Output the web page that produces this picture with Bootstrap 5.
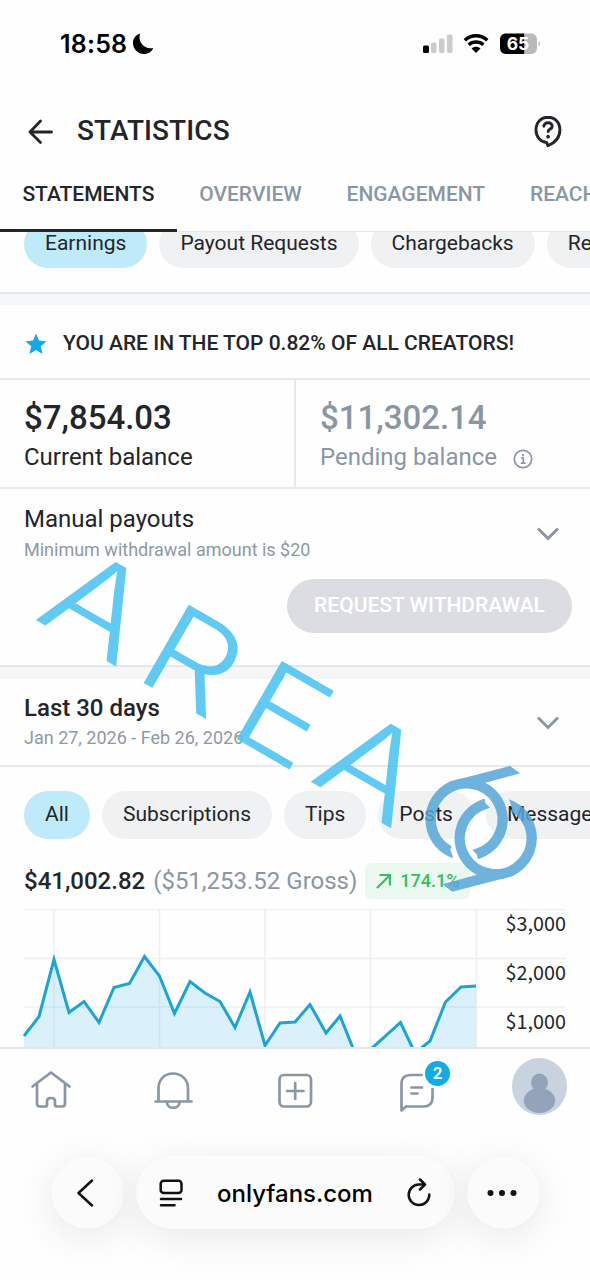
<!DOCTYPE html>
<html lang="en">
<head>
<meta charset="utf-8">
<meta name="viewport" content="width=device-width, initial-scale=1">
<title>Statistics</title>
<link rel="stylesheet" href="https://cdn.jsdelivr.net/npm/bootstrap@5.3.0/dist/css/bootstrap.min.css">
<style>
  html, body { overflow: hidden; }
  body { font-family: Roboto, "Liberation Sans", sans-serif; color: #242529; background: #fefefe; line-height: 1; }
  svg { display: block; flex: none; }
  .screen { width: 590px; height: 1280px; overflow: hidden; }
  .ios { font-family: Inter, "Liberation Sans", sans-serif; color: #000; }
  .status { height: 88px; padding: 0 50px 0 60px; }
  .clock { font-size: 25px; font-weight: 600; letter-spacing: .2px; }
  .moon { margin-left: 5px; }
  .page-head { height: 84px; padding: 1px 27px 0; gap: 24px; }
  .page-title { font-size: 28px; font-weight: 500; letter-spacing: .1px; }
  .tabs { height: 60px; border-bottom: 1px solid #e4e6e8; }
  .tab { font-size: 21px; font-weight: 500; color: #8a96a3; padding: 12px 22.4px 0; height: 60px; }
  .tab.active { color: #242529; border-bottom: 3px solid #242529; }
  .clip-pills { height: 62px; border-bottom: 2px solid #e4e7ea; }
  .clip-pills .pills { margin-top: -12.5px; }
  .clip-pills .pill { padding-bottom: 1px; }
  .pills { gap: 12px; padding-left: 24px; }
  .pill { height: 48px; border-radius: 24px; background: #f0f1f3; padding: 0 21px 1px; font-size: 21px; }
  .pill.active { background: #bfeafa; }
  .band { height: 12px; background: #f4f6f8; }
  .band-top { height: 11px; }
  .top-row { height: 75px; padding: 4px 0 0 25px; gap: 16px; border-bottom: 2px solid #e7e9eb; font-size: 21px; font-weight: 500; }
  .balances { height: 109px; border-bottom: 2px solid #e7e9eb; }
  .balance { padding: 21px 24px 0; width: 294px; }
  .balance + .balance { border-left: 2px solid #e7e9eb; }
  .amount { font-size: 33px; font-weight: 500; margin-bottom: 11px; }
  .row-title { font-size: 24px; }
  .medium { font-weight: 500; }
  .soft { color: #8a96a3; }
  .note { font-size: 18px; color: #8f99a4; margin-top: 10px; }
  .payouts { height: 178px; padding: 18px 18px 0 24px; border-bottom: 2px solid #e4e7ea; }
  .chev { margin: 19px 12px 0 0; }
  .withdraw { width: 285px; height: 54px; border-radius: 27px; background: #dbdde2; color: #fff; font-size: 21px; font-weight: 500; margin-top: 20px; padding-bottom: 2px; }
  .period { height: 88px; padding: 17px 18px 0 24px; border-bottom: 2px solid #e7e9eb; }
  .period .note { margin-top: 9px; }
  .filters { margin-top: 24px; }
  .totals { height: 36px; margin: 24px 0 10px; padding-left: 24px; font-size: 24px; gap: 8px; }
  .trend { height: 36px; width: 105px; border-radius: 6px; background: #ebf8f0; color: #35bd60; font-size: 18px; font-weight: 500; }
  .bottom-nav { height: 84px; border-top: 2px solid #e4e7ea; }
  .count { width: 25px; height: 25px; background: #10abe9; color: #fff; font-size: 17px; font-weight: 600; left: 425px; top: 12px; }
  .browser { padding-left: 51px; gap: 12px; margin-top: 25px; }
  .glass { background: #fbfbfb; height: 73px; border-radius: 37px; box-shadow: 0 8px 40px rgba(0,0,0,.09), 0 0 3px rgba(0,0,0,.025); }
  .round { width: 73px; padding-right: 3px; }
  .address { width: 319px; padding-left: 23px; gap: 34px; }
  .host { font-size: 24px; font-weight: 500; padding-top: 3px; }
</style>
</head>
<body>
<main class="screen position-relative">
  <header class="ios status d-flex align-items-center">
    <span class="clock">18:58</span>
    <svg class="moon" width="22" height="22" viewBox="0 0 22 22"><path d="M8 0.600C3.500 2 1 5.800 1 10c0 6 4.800 11 11 11 4.300 0 7.800-2.300 9.300-6C12.800 17 5.500 9.500 8 .6z"/></svg>
    <svg class="ms-auto" width="118" height="26" viewBox="422 31 118 26">
      <rect x="423" y="45.500" width="6" height="7.500" rx="1.500"/>
      <g fill="#cbcbcb"><rect x="431" y="42.500" width="5.500" height="10.500" rx="1.500"/><rect x="439" y="38.500" width="5.500" height="14.500" rx="1.500"/><rect x="447" y="34.500" width="5.500" height="18.500" rx="1.500"/></g>
      <g fill="none" stroke="#000" stroke-width="3.400"><path d="M464.800 40.200c6.500-5.900 16-5.900 22.500 0M468.700 44.700c4.200-3.700 10.500-3.700 14.700 0"/></g>
      <path d="M476 53l-4.500-4.600c2.700-2.200 6.300-2.200 9 0z"/>
      <path d="M506.500 33.500h18v20.500h-18c-4.500 0-6.500-2.500-6.500-6.500v-7.500c0-4 2-6.500 6.500-6.500z"/>
      <path d="M524.500 33.500h6c4.500 0 6.500 2.500 6.500 6.500v7.500c0 4-2 6.500-6.500 6.500h-6z" fill="#b9b9b9"/>
      <path d="M538.500 41.200c2 .7 2 4.300 0 5z" fill="#b9b9b9"/>
      <text x="518" y="50" font-size="17.500" font-weight="700" fill="#fff" text-anchor="middle">65</text>
    </svg>
  </header>

  <div class="page-head d-flex align-items-center">
    <svg width="26" height="28" viewBox="0 0 26 28" fill="none" stroke="#242529" stroke-width="2.800" stroke-linecap="round" stroke-linejoin="round"><path d="M24.500 15H3M13.500 4L3 15l10.500 10.500"/></svg>
    <span class="page-title">STATISTICS</span>
    <svg class="ms-auto" width="30" height="36" viewBox="533 113 30 36" fill="none" stroke="#242529" stroke-width="2.900" stroke-linecap="round" stroke-linejoin="round"><path d="M548 117.300c-7 0-12 5.200-12 12.700 0 6.700 4.500 12 10.600 12.500l1.300 3.200c7.500-3 12-8.700 12-15.900 0-7.300-4.900-12.500-11.900-12.500z"/><path d="M543.800 126.200c.3-4.700 8.500-4.600 8.400.2-.1 2.700-4 2.600-4.100 5.200"/><circle cx="548.100" cy="136.700" r="1.900" fill="#242529" stroke="none"/></svg>
  </div>

  <nav class="tabs d-flex text-nowrap">
    <span class="tab active">STATEMENTS</span>
    <span class="tab">OVERVIEW</span>
    <span class="tab">ENGAGEMENT</span>
    <span class="tab">REACH</span>
  </nav>

  <section class="clip-pills overflow-hidden">
    <div class="pills d-flex text-nowrap">
      <span class="pill active d-flex align-items-center">Earnings</span>
      <span class="pill d-flex align-items-center">Payout Requests</span>
      <span class="pill d-flex align-items-center">Chargebacks</span>
      <span class="pill d-flex align-items-center">Referrals</span>
    </div>
  </section>
  <div class="band band-top"></div>

  <section class="top-row d-flex align-items-center">
    <svg width="22" height="22" viewBox="0 0 22 22" fill="#10abe9"><path d="M11 .5l3 7 7.500.7-5.700 5 1.700 7.800-6.500-4-6.500 4 1.700-7.800-5.700-5 7.500-.7z"/></svg>
    <span>YOU ARE IN THE TOP 0.82% OF ALL CREATORS!</span>
  </section>

  <section class="balances d-flex">
    <div class="balance">
      <div class="amount">$7,854.03</div>
      <div class="row-title">Current balance</div>
    </div>
    <div class="balance flex-fill soft">
      <div class="amount">$11,302.14</div>
      <div class="row-title d-flex align-items-center">Pending balance
        <svg class="ms-3 mt-1" width="20" height="20" viewBox="0 0 20 20" fill="none" stroke="#8a96a3" stroke-width="1.700"><circle cx="10" cy="10" r="8.700"/><path d="M8 9h2.300v5M7.800 14.200h4.600M10 5v2.300"/></svg></div>
    </div>
  </section>

  <section class="payouts">
    <div class="d-flex justify-content-between">
      <div>
        <div class="row-title">Manual payouts</div>
        <div class="note">Minimum withdrawal amount is $20</div>
      </div>
      <svg class="chev" width="24" height="16" viewBox="0 0 24 16" fill="none" stroke="#8a96a3" stroke-width="3"><path d="M2 2.500l10 10 10-10"/></svg>
    </div>
    <div class="withdraw ms-auto d-flex align-items-center justify-content-center">REQUEST WITHDRAWAL</div>
  </section>
  <div class="band"></div>

  <section class="period d-flex justify-content-between">
    <div>
      <div class="row-title medium">Last 30 days</div>
      <div class="note">Jan 27, 2026 - Feb 26, 2026</div>
    </div>
    <svg class="chev" width="24" height="16" viewBox="0 0 24 16" fill="none" stroke="#8a96a3" stroke-width="3"><path d="M2 2.500l10 10 10-10"/></svg>
  </section>

  <section>
    <div class="pills filters d-flex text-nowrap">
      <span class="pill active d-flex align-items-center">All</span>
      <span class="pill d-flex align-items-center">Subscriptions</span>
      <span class="pill d-flex align-items-center">Tips</span>
      <span class="pill d-flex align-items-center">Posts</span>
      <span class="pill d-flex align-items-center">Messages</span>
    </div>
    <div class="totals d-flex align-items-center">
      <span class="medium">$41,002.82</span>
      <span class="soft">($51,253.52 Gross)</span>
      <span class="trend d-flex align-items-center justify-content-center">
        <svg width="16" height="16" viewBox="0 0 16 16" fill="none" stroke="#35bd60" stroke-width="2.200"><path d="M1 15L14 2M3.500 2H14v10.500"/></svg>
        <span class="ms-2">174.1%</span>
      </span>
    </div>
    <svg width="590" height="138" viewBox="0 909 590 138">
      <path d="M24 909.500H566M24 958.500H566M24 1007H566M54 909V1047M159.500 909V1047M265 909V1047M370.500 909V1047M476.500 909V1047" stroke="#eeeff1" stroke-width="1.500" fill="none"/>
      <path fill="#10abe9" fill-opacity=".15" d="M24 1036L39 1016.500 54 959.500 69 1012.500 84 1001.500 99 1022.500 114 987.500 129.500 983.500 144.500 956.500 159.500 976 174.500 1013.500 190 981.500 205 993 220 1001.500 235 1027.500 250 992 265 1045.500 280 1023 295 1022 310 1004.500 326 1033 340 1016 355 1053 371 1049 400.500 1022.500 415 1053 430 1041 445.500 1002 461 987 476 986V1060H24z"/>
      <path fill="none" stroke="#1ca4d6" stroke-width="3" d="M24 1036L39 1016.500 54 959.500 69 1012.500 84 1001.500 99 1022.500 114 987.500 129.500 983.500 144.500 956.500 159.500 976 174.500 1013.500 190 981.500 205 993 220 1001.500 235 1027.500 250 992 265 1045.500 280 1023 295 1022 310 1004.500 326 1033 340 1016 355 1053 371 1049 400.500 1022.500 415 1053 430 1041 445.500 1002 461 987 476 986"/>
      <g font-family="'Noto Sans CJK SC','Noto Sans',sans-serif" font-size="19.800" fill="#242529" text-anchor="end"><text x="566" y="931">$3,000</text><text x="566" y="979.500">$2,000</text><text x="566" y="1028.500">$1,000</text></g>
    </svg>
  </section>

  <nav class="bottom-nav position-relative">
    <svg width="590" height="78" viewBox="0 1049 590 78" fill="none" stroke="#8a96a3" stroke-width="2.700" stroke-linecap="round" stroke-linejoin="round">
      <path d="M32.500 1086.500L51 1072.500l18.500 14M37 1084v19.500q0 3 3 3h5q2 0 2-2v-3.500q0-3 4-3t4 3v3.500q0 2 2 2h5q3 0 3-3V1084"/>
      <path d="M155.500 1101.500h36M158.500 1101v-12.500c0-9 6-15 14.500-15s15 6 15 15V1101M167 1102.500c0 7 12.500 7 12.500 0"/>
      <rect x="279.500" y="1075" width="31.500" height="31.500" rx="4.500"/><path d="M295.200 1083v16M287 1091h16.500"/>
      <path d="M421.500 1075h-11q-9 0-9 9v26.500l4.500-4h17.500q9 0 9-9V1089M411.500 1087.500h10.500M411.500 1093.500h6"/>
      <g stroke="none"><clipPath id="face"><ellipse cx="539.500" cy="1086.500" rx="27.500" ry="28.500"/></clipPath><ellipse cx="539.500" cy="1086.500" rx="27.500" ry="28.500" fill="#c9d2df"/><g clip-path="url(#face)" fill="#93a3ba"><ellipse cx="539.500" cy="1082.500" rx="8.500" ry="9"/><ellipse cx="539.500" cy="1100.500" rx="15.700" ry="12.500"/></g></g>
    </svg>
    <span class="count badge rounded-circle position-absolute d-flex align-items-center justify-content-center p-0">2</span>
  </nav>

  <div class="ios browser d-flex align-items-center">
    <span class="glass round d-flex align-items-center justify-content-center"><svg width="18" height="30" viewBox="0 0 18 30" fill="none" stroke="#111" stroke-width="2.500" stroke-linecap="round" stroke-linejoin="round"><path d="M15 2.500L1.500 15 15 27.500"/></svg></span>
    <span class="glass address d-flex align-items-center">
      <svg width="24" height="30" viewBox="159 1178.500 24 30" fill="none" stroke="#111" stroke-width="2.500" stroke-linecap="round"><rect x="160.700" y="1181.200" width="20.800" height="12.300" rx="3"/><path d="M161 1199.500h20M161 1205.700h13.500"/></svg>
      <span class="host">onlyfans.com</span>
      <svg width="25" height="30" viewBox="406.500 1178 25 30" fill="none" stroke="#111" stroke-width="2.500" stroke-linecap="round" stroke-linejoin="round"><path d="M424 1184.500h-5.500a10.300 10.300 0 1 0 10.300 10M419.500 1179.500l5 5-5 5"/></svg>
    </span>
    <span class="glass round d-flex align-items-center justify-content-center"><svg width="30" height="8" viewBox="0 0 30 8" fill="#111"><circle cx="3.500" cy="4" r="3"/><circle cx="15" cy="4" r="3"/><circle cx="26.500" cy="4" r="3"/></svg></span>
  </div>

  <svg class="position-absolute top-0 start-0 pe-none" width="590" height="1280" viewBox="0 0 590 1280">
    <g transform="rotate(30)" font-family="Inter" font-weight="300" font-size="124" fill="#4fc5f2" opacity=".9">
      <text x="337" y="519" textLength="101" lengthAdjust="spacingAndGlyphs">A</text>
      <text x="452" y="519.500" textLength="91" lengthAdjust="spacingAndGlyphs">R</text>
      <text x="561" y="521.500" textLength="84" lengthAdjust="spacingAndGlyphs">E</text>
      <text x="656" y="521.500" textLength="101" lengthAdjust="spacingAndGlyphs">A</text>
    </g>
    <g transform="translate(410 750) scale(.33333)" opacity=".85">
      <g id="hook" fill="#55a6d9"><path d="M115 96L300 48l30 22L232 97 150 116z"/><path d="M111 317l19 8-12-35zM187 300l12-4 5 30 8-1z"/><path d="M118 303A108 108 0 1 1 200 312" fill="none" stroke="#55a6d9" stroke-width="31"/></g>
      <use href="#hook" transform="rotate(180 213.500 236.500)"/>
    </g>
  </svg>
</main>
<script src="https://cdn.jsdelivr.net/npm/bootstrap@5.3.0/dist/js/bootstrap.bundle.min.js"></script>
</body>
</html>
